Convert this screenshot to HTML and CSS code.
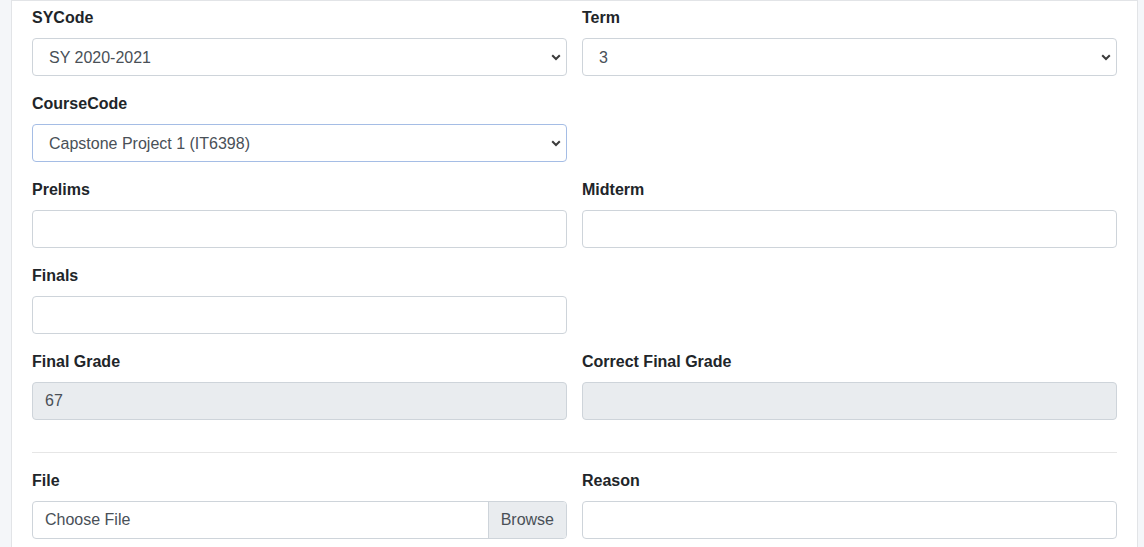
FILE: index.html
```html
<!DOCTYPE html>
<html lang="en">
<head>
<meta charset="utf-8">
<title>Grade Correction</title>
<link rel="stylesheet" href="styles.css">
</head>
<body>
<div class="card">
  <form class="card-body">
    <div class="form-row">
      <div class="form-group">
        <label class="form-label">SYCode</label>
        <div class="select-wrap">
          <div class="form-control select">SY 2020-2021</div>
          <svg class="chevron" width="10" height="7" viewBox="0 0 10 7"><path d="M1.2 1.2 L5 5 L8.8 1.2" fill="none" stroke="#3c3c3c" stroke-width="2"/></svg>
        </div>
      </div>
      <div class="form-group">
        <label class="form-label">Term</label>
        <div class="select-wrap">
          <div class="form-control select">3</div>
          <svg class="chevron" width="10" height="7" viewBox="0 0 10 7"><path d="M1.2 1.2 L5 5 L8.8 1.2" fill="none" stroke="#3c3c3c" stroke-width="2"/></svg>
        </div>
      </div>
    </div>
    <div class="form-row">
      <div class="form-group">
        <label class="form-label">CourseCode</label>
        <div class="select-wrap">
          <div class="form-control select focused">Capstone Project 1 (IT6398)</div>
          <svg class="chevron" width="10" height="7" viewBox="0 0 10 7"><path d="M1.2 1.2 L5 5 L8.8 1.2" fill="none" stroke="#3c3c3c" stroke-width="2"/></svg>
        </div>
      </div>
    </div>
    <div class="form-row">
      <div class="form-group">
        <label class="form-label">Prelims</label>
        <div class="form-control"></div>
      </div>
      <div class="form-group">
        <label class="form-label">Midterm</label>
        <div class="form-control"></div>
      </div>
    </div>
    <div class="form-row">
      <div class="form-group">
        <label class="form-label">Finals</label>
        <div class="form-control"></div>
      </div>
    </div>
    <div class="form-row">
      <div class="form-group">
        <label class="form-label">Final Grade</label>
        <div class="form-control disabled">67</div>
      </div>
      <div class="form-group">
        <label class="form-label">Correct Final Grade</label>
        <div class="form-control disabled"></div>
      </div>
    </div>
    <hr class="divider">
    <div class="form-row">
      <div class="form-group">
        <label class="form-label">File</label>
        <div class="custom-file">
          <span class="custom-file-text">Choose File</span>
          <span class="custom-file-btn">Browse</span>
        </div>
      </div>
      <div class="form-group">
        <label class="form-label">Reason</label>
        <div class="form-control"></div>
      </div>
    </div>
  </form>
</div>
</body>
</html>
```

FILE: styles.css
```css
* { box-sizing: border-box; }

html, body {
  margin: 0;
  padding: 0;
}

body {
  background: #f4f6f9;
  font-family: "Liberation Sans", Arial, sans-serif;
  font-size: 16px;
  line-height: 1.5;
  color: #212529;
  height: 547px;
  overflow: hidden;
}

.card {
  margin-left: 11px;
  width: 1127px;
  height: 547px;
  overflow: hidden;
  background: #fff;
  border: 1px solid #e2e4e7;
  border-bottom: none;
}

.card-body {
  display: block;
  padding: 5px 20px 0 20px;
}

.form-row {
  display: grid;
  grid-template-columns: 1fr 1fr;
  column-gap: 15px;
}

.form-group {
  margin-bottom: 16px;
}

.form-label {
  display: block;
  font-weight: 700;
  margin-bottom: 8px;
  height: 24px;
}

.form-control {
  display: block;
  width: 100%;
  height: 38px;
  padding: 6px 12px;
  font-size: 16px;
  line-height: 24px;
  color: #495057;
  background: #fff;
  border: 1px solid #ced4da;
  border-radius: 4px;
}

.form-control.select {
  padding: 7px 16px 5px 16px;
}

.form-control.focused {
  border-color: #a5bde5;
}

.form-control.disabled {
  background: #e9ecef;
}

.select-wrap {
  position: relative;
}

.chevron {
  position: absolute;
  right: 6px;
  top: 16px;
}

.divider {
  margin: 16px 0;
  border: 0;
  border-top: 1px solid #e6e6e6;
  height: 0;
}

.custom-file {
  display: flex;
  height: 38px;
  border: 1px solid #ced4da;
  border-radius: 4px;
  overflow: hidden;
  color: #495057;
}

.custom-file-text {
  flex: 1;
  padding: 6px 12px;
  line-height: 24px;
}

.custom-file-btn {
  padding: 6px 12px;
  line-height: 24px;
  background: #e9ecef;
  border-left: 1px solid #ced4da;
}
```
